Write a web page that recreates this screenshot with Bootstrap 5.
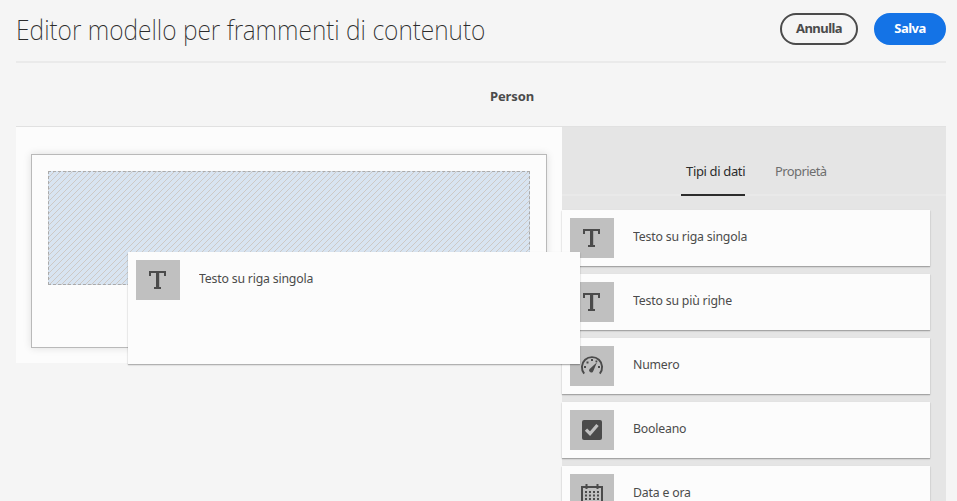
<!DOCTYPE html>
<html lang="it">
<head>
<meta charset="utf-8">
<title>Editor modello per frammenti di contenuto</title>
<meta name="viewport" content="width=device-width, initial-scale=1">
<link href="https://cdn.jsdelivr.net/npm/bootstrap@5.3.0/dist/css/bootstrap.min.css" rel="stylesheet">
<style>
body{background:#f5f5f5;color:#4b4b4b;font:400 13px/20px "Noto Sans","Open Sans",sans-serif;width:957px;height:501px;overflow:hidden}
.editor{padding:0 11px 0 16px;height:501px}
.editor-head{height:63px;border-bottom:2px solid #eaeaea}
.editor-title{font-size:27px;line-height:34px;font-weight:200;color:#2c2c2c;margin:0 0 2px;white-space:nowrap;transform:scaleX(.913);transform-origin:0 50%}
.pill{height:32px;border-radius:16px;border:2px solid #4b4b4b;font-size:13px;font-weight:700;line-height:27px;padding:0;color:#4b4b4b;width:78px;letter-spacing:-.55px}
.pill-save{background:#1473e6;border-color:#1473e6;color:#fff;width:72px}
.model-name{height:63px;line-height:66px;padding-left:62px;font-weight:700;letter-spacing:-.1px}
.workspace{border-top:1px solid #e1e1e1;height:375px}
.canvas{width:546px;height:236px;background:#fcfcfc;padding:27px 15px 15px}
.form-box{height:194px;border:1px solid #b9b9b9;padding:16px;box-shadow:0 0 8px rgba(0,0,0,.12)}
.drop-zone{height:114px;border:1px dashed #aaa;background:linear-gradient(135deg,#d8e4f1 0 38%,#cdc9c6 38% 50%,#d8e4f1 50% 88%,#cdc9c6 88%) 0 0/6px 6px}
.sidebar{width:384px;background:#e5e5e5;height:375px}
.tabs{height:69px;border-bottom:2px solid #e9e9e9;padding:24px 0 0 119px;gap:25px}
.tab{line-height:40px;padding:0 0 0 5px;height:45px;color:#6e6e6e;width:64px;white-space:nowrap;letter-spacing:-.35px}
.tab + .tab{letter-spacing:-.6px}
.tab.active{border-bottom:2px solid #2c2c2c;color:#2c2c2c}
.types{padding-top:14px;gap:8px;width:368px}
.type-card{height:56px;background:#fcfcfc;padding:8px;box-shadow:0 1px 1px rgba(0,0,0,.2),0 1px 2px rgba(0,0,0,.14)}
.type-icon{width:44px;height:40px;background:#c0c0c0;color:#4b4b4b;margin-right:19px}
.type-label{line-height:36px;letter-spacing:-.2px;white-space:nowrap;height:36px;transform:scaleX(.945);transform-origin:0 50%}
.drag-card{left:128px;top:252px;width:452px;height:112px}
</style>
<script src="https://cdn.jsdelivr.net/npm/bootstrap@5.3.0/dist/js/bootstrap.bundle.min.js"></script>
</head>
<body>
<svg width="0" height="0" class="d-none">
<symbol id="i-text" viewBox="0 0 44 40"><path fill="currentColor" d="M13 11h17v5h-2v-3h-4.800v14H25v2h-7v-2h2V13h-5v3h-2z"/></symbol>
<symbol id="i-gauge" viewBox="0 0 44 40"><path fill="none" stroke="currentColor" stroke-width="1.900" d="M14.200 27.600a10.100 10.100 0 1 1 15.600 0"/><path fill="currentColor" d="M27 16.200L23.300 25a2.100 2.100 0 1 1-3.700-1.900zM14 20h2v2h-2zM16.500 15.500h2v2h-2zM21 13h2v2h-2zM25.500 14.500h1.800v1.800h-1.800zM28 20h2v2h-2z"/></symbol>
<symbol id="i-check" viewBox="0 0 44 40"><rect x="12" y="10" width="20" height="20" rx="2" fill="currentColor"/><path fill="none" stroke="#c0c0c0" stroke-width="3.200" d="M16 19.700l4 4 7.500-8.700"/></symbol>
<symbol id="i-cal" viewBox="0 0 44 40"><path fill="currentColor" fill-rule="evenodd" d="M11 12h22v20H11zM13 14v16h18V14z"/><path fill="currentColor" d="M15.500 10h2v5h-2zM26.500 10h2v5h-2z"/><path stroke="currentColor" stroke-width="2" stroke-dasharray="2 2" d="M15 18h14M15 21.500h14M15 25h14"/></symbol>
</svg>
<main class="editor">
<header class="editor-head d-flex align-items-center justify-content-between">
<h1 class="editor-title">Editor modello per frammenti di contenuto</h1>
<div class="d-flex gap-3 mb-1"><button class="btn pill">Annulla</button><button class="btn pill pill-save">Salva</button></div>
</header>
<div class="model-name text-center">Person</div>
<div class="workspace d-flex">
<section class="canvas"><div class="form-box"><div class="drop-zone"></div></div></section>
<aside class="sidebar">
<nav class="tabs d-flex"><span class="tab active">Tipi di dati</span><span class="tab">Proprietà</span></nav>
<div class="types d-flex flex-column">
<div class="type-card d-flex"><svg class="type-icon"><use href="#i-text"/></svg><span class="type-label">Testo su riga singola</span></div>
<div class="type-card d-flex"><svg class="type-icon"><use href="#i-text"/></svg><span class="type-label">Testo su più righe</span></div>
<div class="type-card d-flex"><svg class="type-icon"><use href="#i-gauge"/></svg><span class="type-label">Numero</span></div>
<div class="type-card d-flex"><svg class="type-icon"><use href="#i-check"/></svg><span class="type-label">Booleano</span></div>
<div class="type-card d-flex"><svg class="type-icon"><use href="#i-cal"/></svg><span class="type-label">Data e ora</span></div>
</div>
</aside>
</div>
</main>
<div class="drag-card type-card d-flex position-absolute"><svg class="type-icon"><use href="#i-text"/></svg><span class="type-label">Testo su riga singola</span></div>
</body>
</html>
